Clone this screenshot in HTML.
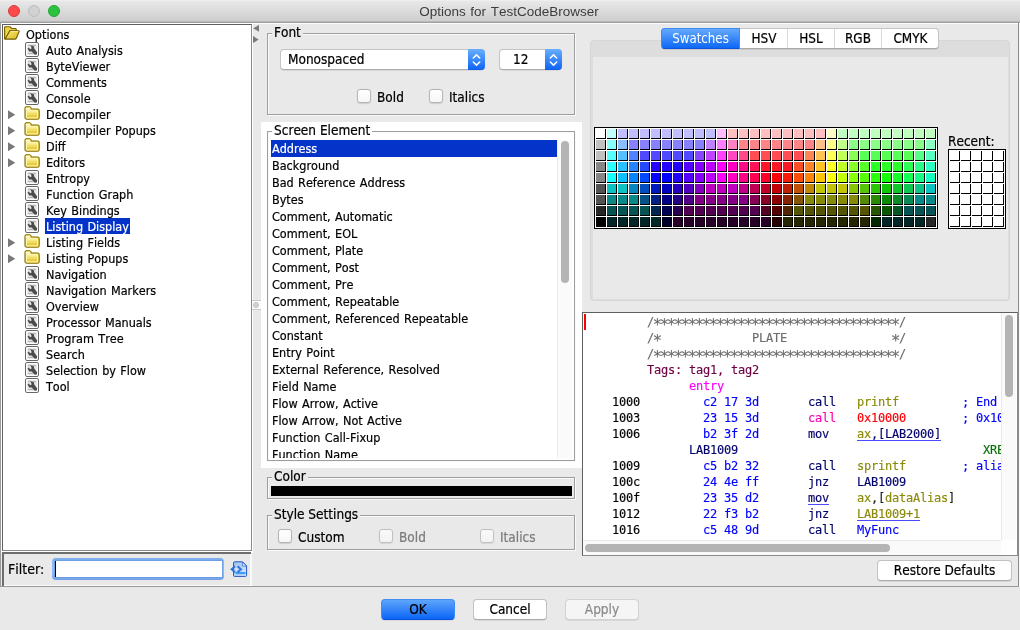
<!DOCTYPE html>
<html lang="en"><head><meta charset="utf-8"><title>Options for TestCodeBrowser</title>
<style>
*{box-sizing:border-box;margin:0;padding:0}
html,body{width:1020px;height:630px;overflow:hidden;background:#e9e9e9}
body{position:relative;will-change:transform;font-kerning:none;font-family:"DejaVu Sans Condensed","DejaVu Sans","Liberation Sans",sans-serif;font-size:12.5px;word-spacing:.8px;color:#000;line-height:16px}
.abs{position:absolute}
.t,.gt,.btn{-webkit-text-stroke:.2px}
.m{-webkit-text-stroke:.15px}
#titlebar{left:0;top:0;width:1020px;height:23px;background:linear-gradient(#f4f4f4 0,#e8e8e8 1px,#cfcfcf 20px,#cdcdcd 21px,#b9b9b9 21px,#b9b9b9 22px,#9f9f9f 22px)}
#title{left:0;top:4px;width:1018px;text-align:center;font-family:"Liberation Sans",sans-serif;font-size:13.5px;color:#3d3d3d;line-height:16px}
.tl{width:12px;height:12px;border-radius:50%;top:5px}
.t{white-space:nowrap;position:absolute;line-height:18px;height:16px}
.st{font-size:15.5px;letter-spacing:-2.331px;position:relative;top:4.3px;left:-1.2px;line-height:0}
.b{font-size:13.5px;word-spacing:0}
.sel{background:#0433c9;color:#fff}
.gb{border:1px solid #9e9e9e;box-shadow:1px 1px 0 #fafafa,inset 1px 1px 0 #fafafa}
.gt{background:#e9e9e9;padding:0 2px;white-space:nowrap;line-height:17px;height:16px;font-size:13.5px;word-spacing:0}
.cb{width:14px;height:14px;border:1px solid #b4b4b4;border-radius:3px;background:linear-gradient(#fff,#f6f6f6);box-shadow:0 .5px 1px rgba(0,0,0,.12)}
.btn{border:1px solid #c2c2c2;border-bottom-color:#ababab;border-radius:4px;background:#fff;text-align:center;white-space:nowrap;box-shadow:0 .5px .5px rgba(0,0,0,.15)}
.m{word-spacing:0;font-family:"DejaVu Sans Mono","Liberation Mono",monospace;font-size:12px;letter-spacing:-0.224px;white-space:pre;position:absolute;line-height:16px;height:16px}
</style></head>
<body>
<svg width="0" height="0" style="position:absolute"><defs>
<linearGradient id="fg" x1="0" y1="0" x2="0" y2="1"><stop offset="0" stop-color="#fcf3a0"/><stop offset="1" stop-color="#e2c222"/></linearGradient>
<linearGradient id="fg2" x1="0" y1="0" x2="1" y2="1"><stop offset="0" stop-color="#faec80"/><stop offset="1" stop-color="#dbb714"/></linearGradient>



</defs></svg>
<div id="titlebar" class="abs"></div>
<div class="abs tl" style="left:8px;background:#fc4a4b;border:.5px solid #e0383a"></div>
<div class="abs tl" style="left:28px;background:#d1d1d1;border:.5px solid #bdbdbd"></div>
<div class="abs tl" style="left:48px;background:#2bc23f;border:.5px solid #20a632"></div>
<div class="abs" style="left:1px;top:23px;width:1017px;height:1px;background:#fcfcfc"></div><div class="abs" style="left:1019px;top:23px;width:1px;height:564px;background:#f8f8f8"></div>
<div id="title" class="abs">Options for TestCodeBrowser</div>
<div class="abs" style="left:0;top:23px;width:1px;height:564px;background:#9c9c9c"></div>
<div class="abs" style="left:1px;top:23px;width:252px;height:530px;background:#fff"></div>
<div id="tree" class="abs" style="left:2px;top:24px;width:250px;height:527px;background:#fff;border:1px solid #5f5f5f;border-right-color:#8a8a8a;border-bottom-color:#8a8a8a"></div>
<svg class="abs" style="left:4px;top:26px" width="16" height="14" viewBox="0 0 16 14"><path d="M.6 1.6 Q.6 .7 1.5 .7 L5.5 .7 Q6.3 .7 6.8 1.4 L7.5 2.5 L11.4 2.5 Q12.2 2.5 12.2 3.3 L12.2 4.7 L6 4.7 L1.5 12.5 L.6 12.5 Z" fill="#efd545" stroke="#6f5b00" stroke-width="1.1"/><path d="M5.9 4.7 L14.6 4.7 Q15.5 4.7 15.1 5.6 L12.3 12.2 Q11.9 13.1 11 13.1 L1.1 13.1 Z" fill="url(#fg2)" stroke="#6f5b00" stroke-width="1.1"/><path d="M6.6 5.5 L14.2 5.5" stroke="#fff6b0" stroke-width=".8"/></svg><div class="t" style="left:26px;top:26px">Options</div>
<svg class="abs" style="left:25px;top:42px" width="14" height="15" viewBox="0 0 14 15"><rect x=".5" y=".5" width="13" height="14" rx="1.5" fill="#fff" stroke="#666" stroke-width="1"/><rect x="2.3" y="2.3" width="9.4" height="10.4" fill="#e3e3e3"/><path d="M3 3.4h8M3 11.6h5" stroke="#aaa" stroke-width=".9"/><path d="M5.2 3.2 L8.8 4.2 L9.2 6.6 L12.2 10.4 L11.6 12.8 L9.4 12.4 L6.8 9.4 L4.2 9.4 L2.6 6.6 L3.6 5.6 L5.2 7.2 L6.6 6.4 L6.2 4.8 Z" fill="#4a4a4a"/></svg><div class="t" style="left:46px;top:42px">Auto Analysis</div>
<svg class="abs" style="left:25px;top:58px" width="14" height="15" viewBox="0 0 14 15"><rect x=".5" y=".5" width="13" height="14" rx="1.5" fill="#fff" stroke="#666" stroke-width="1"/><rect x="2.3" y="2.3" width="9.4" height="10.4" fill="#e3e3e3"/><path d="M3 3.4h8M3 11.6h5" stroke="#aaa" stroke-width=".9"/><path d="M5.2 3.2 L8.8 4.2 L9.2 6.6 L12.2 10.4 L11.6 12.8 L9.4 12.4 L6.8 9.4 L4.2 9.4 L2.6 6.6 L3.6 5.6 L5.2 7.2 L6.6 6.4 L6.2 4.8 Z" fill="#4a4a4a"/></svg><div class="t" style="left:46px;top:58px">ByteViewer</div>
<svg class="abs" style="left:25px;top:74px" width="14" height="15" viewBox="0 0 14 15"><rect x=".5" y=".5" width="13" height="14" rx="1.5" fill="#fff" stroke="#666" stroke-width="1"/><rect x="2.3" y="2.3" width="9.4" height="10.4" fill="#e3e3e3"/><path d="M3 3.4h8M3 11.6h5" stroke="#aaa" stroke-width=".9"/><path d="M5.2 3.2 L8.8 4.2 L9.2 6.6 L12.2 10.4 L11.6 12.8 L9.4 12.4 L6.8 9.4 L4.2 9.4 L2.6 6.6 L3.6 5.6 L5.2 7.2 L6.6 6.4 L6.2 4.8 Z" fill="#4a4a4a"/></svg><div class="t" style="left:46px;top:74px">Comments</div>
<svg class="abs" style="left:25px;top:90px" width="14" height="15" viewBox="0 0 14 15"><rect x=".5" y=".5" width="13" height="14" rx="1.5" fill="#fff" stroke="#666" stroke-width="1"/><rect x="2.3" y="2.3" width="9.4" height="10.4" fill="#e3e3e3"/><path d="M3 3.4h8M3 11.6h5" stroke="#aaa" stroke-width=".9"/><path d="M5.2 3.2 L8.8 4.2 L9.2 6.6 L12.2 10.4 L11.6 12.8 L9.4 12.4 L6.8 9.4 L4.2 9.4 L2.6 6.6 L3.6 5.6 L5.2 7.2 L6.6 6.4 L6.2 4.8 Z" fill="#4a4a4a"/></svg><div class="t" style="left:46px;top:90px">Console</div>
<svg class="abs" style="left:8px;top:110px" width="8" height="10" viewBox="0 0 8 10"><path d="M0 0.3 L7.3 4.8 L0 9.3Z" fill="#7a7a7a"/></svg><svg class="abs" style="left:24px;top:106px" width="16" height="14" viewBox="0 0 16 14"><path d="M1 2.2 Q1 .8 2.3 .8 L5.2 .8 Q6.2 .8 6.8 1.8 L7.6 3 L13.6 3 Q15.2 3 15.2 4.8 L15.2 11.6 Q15.2 13.2 13.6 13.2 L2.6 13.2 Q1 13.2 1 11.6 Z" fill="#f3dd55" stroke="#846c00" stroke-width="1.1"/><path d="M2.6 4.6 L13.6 4.6 L13.6 11.8 L2.6 11.8 Z" fill="url(#fg)" stroke="#fffbd8" stroke-width=".8"/><path d="M1.6 2 L5.6 1.6 L6.8 3.4 L2 3.8Z" fill="#fffbe0"/></svg><div class="t" style="left:46px;top:106px">Decompiler</div>
<svg class="abs" style="left:8px;top:126px" width="8" height="10" viewBox="0 0 8 10"><path d="M0 0.3 L7.3 4.8 L0 9.3Z" fill="#7a7a7a"/></svg><svg class="abs" style="left:24px;top:122px" width="16" height="14" viewBox="0 0 16 14"><path d="M1 2.2 Q1 .8 2.3 .8 L5.2 .8 Q6.2 .8 6.8 1.8 L7.6 3 L13.6 3 Q15.2 3 15.2 4.8 L15.2 11.6 Q15.2 13.2 13.6 13.2 L2.6 13.2 Q1 13.2 1 11.6 Z" fill="#f3dd55" stroke="#846c00" stroke-width="1.1"/><path d="M2.6 4.6 L13.6 4.6 L13.6 11.8 L2.6 11.8 Z" fill="url(#fg)" stroke="#fffbd8" stroke-width=".8"/><path d="M1.6 2 L5.6 1.6 L6.8 3.4 L2 3.8Z" fill="#fffbe0"/></svg><div class="t" style="left:46px;top:122px">Decompiler Popups</div>
<svg class="abs" style="left:8px;top:142px" width="8" height="10" viewBox="0 0 8 10"><path d="M0 0.3 L7.3 4.8 L0 9.3Z" fill="#7a7a7a"/></svg><svg class="abs" style="left:24px;top:138px" width="16" height="14" viewBox="0 0 16 14"><path d="M1 2.2 Q1 .8 2.3 .8 L5.2 .8 Q6.2 .8 6.8 1.8 L7.6 3 L13.6 3 Q15.2 3 15.2 4.8 L15.2 11.6 Q15.2 13.2 13.6 13.2 L2.6 13.2 Q1 13.2 1 11.6 Z" fill="#f3dd55" stroke="#846c00" stroke-width="1.1"/><path d="M2.6 4.6 L13.6 4.6 L13.6 11.8 L2.6 11.8 Z" fill="url(#fg)" stroke="#fffbd8" stroke-width=".8"/><path d="M1.6 2 L5.6 1.6 L6.8 3.4 L2 3.8Z" fill="#fffbe0"/></svg><div class="t" style="left:46px;top:138px">Diff</div>
<svg class="abs" style="left:8px;top:158px" width="8" height="10" viewBox="0 0 8 10"><path d="M0 0.3 L7.3 4.8 L0 9.3Z" fill="#7a7a7a"/></svg><svg class="abs" style="left:24px;top:154px" width="16" height="14" viewBox="0 0 16 14"><path d="M1 2.2 Q1 .8 2.3 .8 L5.2 .8 Q6.2 .8 6.8 1.8 L7.6 3 L13.6 3 Q15.2 3 15.2 4.8 L15.2 11.6 Q15.2 13.2 13.6 13.2 L2.6 13.2 Q1 13.2 1 11.6 Z" fill="#f3dd55" stroke="#846c00" stroke-width="1.1"/><path d="M2.6 4.6 L13.6 4.6 L13.6 11.8 L2.6 11.8 Z" fill="url(#fg)" stroke="#fffbd8" stroke-width=".8"/><path d="M1.6 2 L5.6 1.6 L6.8 3.4 L2 3.8Z" fill="#fffbe0"/></svg><div class="t" style="left:46px;top:154px">Editors</div>
<svg class="abs" style="left:25px;top:170px" width="14" height="15" viewBox="0 0 14 15"><rect x=".5" y=".5" width="13" height="14" rx="1.5" fill="#fff" stroke="#666" stroke-width="1"/><rect x="2.3" y="2.3" width="9.4" height="10.4" fill="#e3e3e3"/><path d="M3 3.4h8M3 11.6h5" stroke="#aaa" stroke-width=".9"/><path d="M5.2 3.2 L8.8 4.2 L9.2 6.6 L12.2 10.4 L11.6 12.8 L9.4 12.4 L6.8 9.4 L4.2 9.4 L2.6 6.6 L3.6 5.6 L5.2 7.2 L6.6 6.4 L6.2 4.8 Z" fill="#4a4a4a"/></svg><div class="t" style="left:46px;top:170px">Entropy</div>
<svg class="abs" style="left:25px;top:186px" width="14" height="15" viewBox="0 0 14 15"><rect x=".5" y=".5" width="13" height="14" rx="1.5" fill="#fff" stroke="#666" stroke-width="1"/><rect x="2.3" y="2.3" width="9.4" height="10.4" fill="#e3e3e3"/><path d="M3 3.4h8M3 11.6h5" stroke="#aaa" stroke-width=".9"/><path d="M5.2 3.2 L8.8 4.2 L9.2 6.6 L12.2 10.4 L11.6 12.8 L9.4 12.4 L6.8 9.4 L4.2 9.4 L2.6 6.6 L3.6 5.6 L5.2 7.2 L6.6 6.4 L6.2 4.8 Z" fill="#4a4a4a"/></svg><div class="t" style="left:46px;top:186px">Function Graph</div>
<svg class="abs" style="left:25px;top:202px" width="14" height="15" viewBox="0 0 14 15"><rect x=".5" y=".5" width="13" height="14" rx="1.5" fill="#fff" stroke="#666" stroke-width="1"/><rect x="2.3" y="2.3" width="9.4" height="10.4" fill="#e3e3e3"/><path d="M3 3.4h8M3 11.6h5" stroke="#aaa" stroke-width=".9"/><path d="M5.2 3.2 L8.8 4.2 L9.2 6.6 L12.2 10.4 L11.6 12.8 L9.4 12.4 L6.8 9.4 L4.2 9.4 L2.6 6.6 L3.6 5.6 L5.2 7.2 L6.6 6.4 L6.2 4.8 Z" fill="#4a4a4a"/></svg><div class="t" style="left:46px;top:202px">Key Bindings</div>
<svg class="abs" style="left:25px;top:218px" width="14" height="15" viewBox="0 0 14 15"><rect x=".5" y=".5" width="13" height="14" rx="1.5" fill="#fff" stroke="#666" stroke-width="1"/><rect x="2.3" y="2.3" width="9.4" height="10.4" fill="#e3e3e3"/><path d="M3 3.4h8M3 11.6h5" stroke="#aaa" stroke-width=".9"/><path d="M5.2 3.2 L8.8 4.2 L9.2 6.6 L12.2 10.4 L11.6 12.8 L9.4 12.4 L6.8 9.4 L4.2 9.4 L2.6 6.6 L3.6 5.6 L5.2 7.2 L6.6 6.4 L6.2 4.8 Z" fill="#4a4a4a"/></svg><div class="t sel" style="left:45px;top:218px;padding:0 1px">Listing Display</div>
<svg class="abs" style="left:8px;top:238px" width="8" height="10" viewBox="0 0 8 10"><path d="M0 0.3 L7.3 4.8 L0 9.3Z" fill="#7a7a7a"/></svg><svg class="abs" style="left:24px;top:234px" width="16" height="14" viewBox="0 0 16 14"><path d="M1 2.2 Q1 .8 2.3 .8 L5.2 .8 Q6.2 .8 6.8 1.8 L7.6 3 L13.6 3 Q15.2 3 15.2 4.8 L15.2 11.6 Q15.2 13.2 13.6 13.2 L2.6 13.2 Q1 13.2 1 11.6 Z" fill="#f3dd55" stroke="#846c00" stroke-width="1.1"/><path d="M2.6 4.6 L13.6 4.6 L13.6 11.8 L2.6 11.8 Z" fill="url(#fg)" stroke="#fffbd8" stroke-width=".8"/><path d="M1.6 2 L5.6 1.6 L6.8 3.4 L2 3.8Z" fill="#fffbe0"/></svg><div class="t" style="left:46px;top:234px">Listing Fields</div>
<svg class="abs" style="left:8px;top:254px" width="8" height="10" viewBox="0 0 8 10"><path d="M0 0.3 L7.3 4.8 L0 9.3Z" fill="#7a7a7a"/></svg><svg class="abs" style="left:24px;top:250px" width="16" height="14" viewBox="0 0 16 14"><path d="M1 2.2 Q1 .8 2.3 .8 L5.2 .8 Q6.2 .8 6.8 1.8 L7.6 3 L13.6 3 Q15.2 3 15.2 4.8 L15.2 11.6 Q15.2 13.2 13.6 13.2 L2.6 13.2 Q1 13.2 1 11.6 Z" fill="#f3dd55" stroke="#846c00" stroke-width="1.1"/><path d="M2.6 4.6 L13.6 4.6 L13.6 11.8 L2.6 11.8 Z" fill="url(#fg)" stroke="#fffbd8" stroke-width=".8"/><path d="M1.6 2 L5.6 1.6 L6.8 3.4 L2 3.8Z" fill="#fffbe0"/></svg><div class="t" style="left:46px;top:250px">Listing Popups</div>
<svg class="abs" style="left:25px;top:266px" width="14" height="15" viewBox="0 0 14 15"><rect x=".5" y=".5" width="13" height="14" rx="1.5" fill="#fff" stroke="#666" stroke-width="1"/><rect x="2.3" y="2.3" width="9.4" height="10.4" fill="#e3e3e3"/><path d="M3 3.4h8M3 11.6h5" stroke="#aaa" stroke-width=".9"/><path d="M5.2 3.2 L8.8 4.2 L9.2 6.6 L12.2 10.4 L11.6 12.8 L9.4 12.4 L6.8 9.4 L4.2 9.4 L2.6 6.6 L3.6 5.6 L5.2 7.2 L6.6 6.4 L6.2 4.8 Z" fill="#4a4a4a"/></svg><div class="t" style="left:46px;top:266px">Navigation</div>
<svg class="abs" style="left:25px;top:282px" width="14" height="15" viewBox="0 0 14 15"><rect x=".5" y=".5" width="13" height="14" rx="1.5" fill="#fff" stroke="#666" stroke-width="1"/><rect x="2.3" y="2.3" width="9.4" height="10.4" fill="#e3e3e3"/><path d="M3 3.4h8M3 11.6h5" stroke="#aaa" stroke-width=".9"/><path d="M5.2 3.2 L8.8 4.2 L9.2 6.6 L12.2 10.4 L11.6 12.8 L9.4 12.4 L6.8 9.4 L4.2 9.4 L2.6 6.6 L3.6 5.6 L5.2 7.2 L6.6 6.4 L6.2 4.8 Z" fill="#4a4a4a"/></svg><div class="t" style="left:46px;top:282px">Navigation Markers</div>
<svg class="abs" style="left:25px;top:298px" width="14" height="15" viewBox="0 0 14 15"><rect x=".5" y=".5" width="13" height="14" rx="1.5" fill="#fff" stroke="#666" stroke-width="1"/><rect x="2.3" y="2.3" width="9.4" height="10.4" fill="#e3e3e3"/><path d="M3 3.4h8M3 11.6h5" stroke="#aaa" stroke-width=".9"/><path d="M5.2 3.2 L8.8 4.2 L9.2 6.6 L12.2 10.4 L11.6 12.8 L9.4 12.4 L6.8 9.4 L4.2 9.4 L2.6 6.6 L3.6 5.6 L5.2 7.2 L6.6 6.4 L6.2 4.8 Z" fill="#4a4a4a"/></svg><div class="t" style="left:46px;top:298px">Overview</div>
<svg class="abs" style="left:25px;top:314px" width="14" height="15" viewBox="0 0 14 15"><rect x=".5" y=".5" width="13" height="14" rx="1.5" fill="#fff" stroke="#666" stroke-width="1"/><rect x="2.3" y="2.3" width="9.4" height="10.4" fill="#e3e3e3"/><path d="M3 3.4h8M3 11.6h5" stroke="#aaa" stroke-width=".9"/><path d="M5.2 3.2 L8.8 4.2 L9.2 6.6 L12.2 10.4 L11.6 12.8 L9.4 12.4 L6.8 9.4 L4.2 9.4 L2.6 6.6 L3.6 5.6 L5.2 7.2 L6.6 6.4 L6.2 4.8 Z" fill="#4a4a4a"/></svg><div class="t" style="left:46px;top:314px">Processor Manuals</div>
<svg class="abs" style="left:25px;top:330px" width="14" height="15" viewBox="0 0 14 15"><rect x=".5" y=".5" width="13" height="14" rx="1.5" fill="#fff" stroke="#666" stroke-width="1"/><rect x="2.3" y="2.3" width="9.4" height="10.4" fill="#e3e3e3"/><path d="M3 3.4h8M3 11.6h5" stroke="#aaa" stroke-width=".9"/><path d="M5.2 3.2 L8.8 4.2 L9.2 6.6 L12.2 10.4 L11.6 12.8 L9.4 12.4 L6.8 9.4 L4.2 9.4 L2.6 6.6 L3.6 5.6 L5.2 7.2 L6.6 6.4 L6.2 4.8 Z" fill="#4a4a4a"/></svg><div class="t" style="left:46px;top:330px">Program Tree</div>
<svg class="abs" style="left:25px;top:346px" width="14" height="15" viewBox="0 0 14 15"><rect x=".5" y=".5" width="13" height="14" rx="1.5" fill="#fff" stroke="#666" stroke-width="1"/><rect x="2.3" y="2.3" width="9.4" height="10.4" fill="#e3e3e3"/><path d="M3 3.4h8M3 11.6h5" stroke="#aaa" stroke-width=".9"/><path d="M5.2 3.2 L8.8 4.2 L9.2 6.6 L12.2 10.4 L11.6 12.8 L9.4 12.4 L6.8 9.4 L4.2 9.4 L2.6 6.6 L3.6 5.6 L5.2 7.2 L6.6 6.4 L6.2 4.8 Z" fill="#4a4a4a"/></svg><div class="t" style="left:46px;top:346px">Search</div>
<svg class="abs" style="left:25px;top:362px" width="14" height="15" viewBox="0 0 14 15"><rect x=".5" y=".5" width="13" height="14" rx="1.5" fill="#fff" stroke="#666" stroke-width="1"/><rect x="2.3" y="2.3" width="9.4" height="10.4" fill="#e3e3e3"/><path d="M3 3.4h8M3 11.6h5" stroke="#aaa" stroke-width=".9"/><path d="M5.2 3.2 L8.8 4.2 L9.2 6.6 L12.2 10.4 L11.6 12.8 L9.4 12.4 L6.8 9.4 L4.2 9.4 L2.6 6.6 L3.6 5.6 L5.2 7.2 L6.6 6.4 L6.2 4.8 Z" fill="#4a4a4a"/></svg><div class="t" style="left:46px;top:362px">Selection by Flow</div>
<svg class="abs" style="left:25px;top:378px" width="14" height="15" viewBox="0 0 14 15"><rect x=".5" y=".5" width="13" height="14" rx="1.5" fill="#fff" stroke="#666" stroke-width="1"/><rect x="2.3" y="2.3" width="9.4" height="10.4" fill="#e3e3e3"/><path d="M3 3.4h8M3 11.6h5" stroke="#aaa" stroke-width=".9"/><path d="M5.2 3.2 L8.8 4.2 L9.2 6.6 L12.2 10.4 L11.6 12.8 L9.4 12.4 L6.8 9.4 L4.2 9.4 L2.6 6.6 L3.6 5.6 L5.2 7.2 L6.6 6.4 L6.2 4.8 Z" fill="#4a4a4a"/></svg><div class="t" style="left:46px;top:378px">Tool</div>
<div class="abs" style="left:2px;top:552px;width:249px;height:34px;border-top:2px solid #6e6e6e;border-left:2px solid #6e6e6e;background:#e9e9e9"></div>
<div class="abs" style="left:250px;top:554px;width:2px;height:32px;background:#f9f9f9"></div><div class="abs" style="left:4px;top:585px;width:248px;height:1px;background:#fbfbfb"></div><div class="t b" style="left:8px;top:560px;font-size:14px">Filter:</div>
<div class="abs" style="left:52px;top:558px;width:172px;height:22px;border-radius:4px;background:linear-gradient(#7aabee,#8fb9f2 30%,#8fb9f2 70%,#6f9fe6)"></div>
<div class="abs" style="left:54.5px;top:560.5px;width:167px;height:16.7px;background:#fff;box-shadow:0 0 0 .6px #5e95e2"></div>
<div class="abs" style="left:55px;top:561px;width:1px;height:16px;background:#000"></div>
<svg class="abs" style="left:230px;top:560px" width="18" height="18" viewBox="0 0 18 18"><defs><linearGradient id="pg" x1="0" y1="0" x2="1" y2="1"><stop offset="0" stop-color="#9dc0f0"/><stop offset="1" stop-color="#dbe8fc"/></linearGradient></defs><path d="M4.5 1.8 L12.6 1.8 L16.6 5.8 L16.6 15.4 Q16.6 16.4 15.6 16.4 L4.5 16.4 Q3.5 16.4 3.5 15.4 L3.5 2.8 Q3.5 1.8 4.5 1.8Z" fill="url(#pg)" stroke="#2457c0" stroke-width="1"/><path d="M12.4 2 L12.4 6 L16.4 6Z" fill="#f4f8ff" stroke="#2457c0" stroke-width=".7"/><path d="M5.5 12h10v2.2h-10z" fill="#3a9cff"/><path d="M5 6.2 L1.6 9.2 L5 12.2" fill="none" stroke="#2f74d8" stroke-width="1.9"/><path d="M7.6 6.2 L11 9.2 L7.6 12.2" fill="none" stroke="#2f74d8" stroke-width="1.9"/><path d="M6.3 7.4 L8.3 9.2 L6.3 11 L4.3 9.2Z" fill="#cfe0fb"/></svg>
<svg class="abs" style="left:252px;top:24px" width="8" height="22" viewBox="0 0 8 22"><path d="M7 1 L7 7.7 L1.1 4.3Z M1 12 L1 19 L6.6 15.5Z" fill="#797979"/></svg>
<div class="abs" style="left:252px;top:300px;width:9px;height:10px;background:#fafafa;border-top:1px solid #c9c9c9;border-bottom:1px solid #c9c9c9"></div><div class="abs" style="left:253px;top:302px;width:6px;height:6px;border-radius:50%;background:#d2d2d2;border:.5px solid #c2c2c2"></div>
<div class="abs gb" style="left:267px;top:33px;width:308px;height:82px"></div><div class="abs gt" style="left:272px;top:24px;background:#e9e9e9;padding:0 2px 0 2px">Font</div>
<div class="abs" style="left:280px;top:49px;width:205px;height:21px;border-radius:4px;background:#fff;border:1px solid #c4c4c4;border-bottom-color:#adadad;box-shadow:0 .5px .5px rgba(0,0,0,.15)"></div><div class="abs" style="left:468px;top:49px;width:17px;height:21px;border-radius:0 4px 4px 0;background:linear-gradient(#68affb,#1469f6 92%,#0f5be0)"></div><svg class="abs" style="left:468px;top:50px" width="17" height="20" viewBox="0 0 17 20"><path d="M5.3 8 L8.5 4.9 L11.7 8 M5.3 12 L8.5 15.1 L11.7 12" fill="none" stroke="#fff" stroke-width="1.5" stroke-linecap="round" stroke-linejoin="round"/></svg><div class="t b" style="left:288px;top:50px">Monospaced</div>
<div class="abs" style="left:499px;top:49px;width:63px;height:21px;border-radius:4px;background:#fff;border:1px solid #c4c4c4;border-bottom-color:#adadad;box-shadow:0 .5px .5px rgba(0,0,0,.15)"></div><div class="abs" style="left:545px;top:49px;width:17px;height:21px;border-radius:0 4px 4px 0;background:linear-gradient(#68affb,#1469f6 92%,#0f5be0)"></div><svg class="abs" style="left:545px;top:50px" width="17" height="20" viewBox="0 0 17 20"><path d="M5.3 8 L8.5 4.9 L11.7 8 M5.3 12 L8.5 15.1 L11.7 12" fill="none" stroke="#fff" stroke-width="1.5" stroke-linecap="round" stroke-linejoin="round"/></svg><div class="t b" style="left:513px;top:50px">12</div>
<div class="abs cb" style="left:357px;top:89px"></div><div class="t b" style="left:377px;top:87.5px">Bold</div><div class="abs cb" style="left:429px;top:89px"></div><div class="t b" style="left:449px;top:87.5px">Italics</div>
<div class="abs" style="left:261px;top:122px;width:321px;height:346px;background:#fff"></div>
<div class="abs gb" style="left:267px;top:131px;width:308px;height:330px"></div><div class="abs gt" style="left:272px;top:122px;background:#fff;padding:0 2px 0 2px">Screen Element</div>
<div class="abs" style="left:271px;top:140px;width:302px;height:318px;overflow:hidden"><div class="abs" style="left:0;top:0;width:286px;height:17px;background:#0433c9"></div><div class="t" style="left:1px;top:0px;color:#fff">Address</div><div class="t" style="left:1px;top:17px">Background</div><div class="t" style="left:1px;top:34px">Bad Reference Address</div><div class="t" style="left:1px;top:51px">Bytes</div><div class="t" style="left:1px;top:68px">Comment, Automatic</div><div class="t" style="left:1px;top:85px">Comment, EOL</div><div class="t" style="left:1px;top:102px">Comment, Plate</div><div class="t" style="left:1px;top:119px">Comment, Post</div><div class="t" style="left:1px;top:136px">Comment, Pre</div><div class="t" style="left:1px;top:153px">Comment, Repeatable</div><div class="t" style="left:1px;top:170px">Comment, Referenced Repeatable</div><div class="t" style="left:1px;top:187px">Constant</div><div class="t" style="left:1px;top:204px">Entry Point</div><div class="t" style="left:1px;top:221px">External Reference, Resolved</div><div class="t" style="left:1px;top:238px">Field Name</div><div class="t" style="left:1px;top:255px">Flow Arrow, Active</div><div class="t" style="left:1px;top:272px">Flow Arrow, Not Active</div><div class="t" style="left:1px;top:289px">Function Call-Fixup</div><div class="t" style="left:1px;top:306px">Function Name</div></div>
<div class="abs" style="left:557px;top:140px;width:15px;height:318px;background:#fafafa;border-left:1px solid #ededed"></div><div class="abs" style="left:561px;top:141px;width:8px;height:142px;border-radius:4px;background:#b4b4b4"></div>
<div class="abs gb" style="left:267px;top:477px;width:308px;height:22px"></div><div class="abs gt" style="left:272px;top:468px;background:#e9e9e9;padding:0 2px 0 2px">Color</div>
<div class="abs" style="left:271px;top:486px;width:301px;height:10px;background:#000"></div>
<div class="abs gb" style="left:267px;top:515px;width:308px;height:35px"></div><div class="abs gt" style="left:272px;top:506px;background:#e9e9e9;padding:0 2px 0 2px">Style Settings</div>
<div class="abs cb" style="left:278px;top:529px"></div><div class="t b" style="left:298px;top:528px">Custom</div><div class="abs cb" style="left:379px;top:529px;opacity:.75"></div><div class="t b" style="left:399px;top:528px;color:#7c7c7c">Bold</div><div class="abs cb" style="left:480px;top:529px;opacity:.75"></div><div class="t b" style="left:500px;top:528px;color:#7c7c7c">Italics</div>
<div class="abs" style="left:590px;top:40px;width:420px;height:261px;border-radius:4px;background:#dddddd;border:1px solid #d6d6d6"></div><div class="abs" style="left:593px;top:57px;width:415px;height:242px;background:#e9e9e9"></div>
<div class="abs" style="left:661px;top:28px;width:278px;height:21px;border-radius:4px;background:#fff;border:1px solid #c4c4c4;border-bottom-color:#a9a9a9;box-shadow:0 .5px .5px rgba(0,0,0,.18)"></div><div class="abs" style="left:661px;top:28px;width:79px;height:21px;border-radius:4px 0 0 4px;background:linear-gradient(#64a9fb,#0e68f7);border:1px solid #3c8af5;border-bottom-color:#0a54dd"></div><div class="abs" style="left:787px;top:29px;width:1px;height:19px;background:#d9d9d9"></div><div class="abs" style="left:834px;top:29px;width:1px;height:19px;background:#d9d9d9"></div><div class="abs" style="left:881px;top:29px;width:1px;height:19px;background:#d9d9d9"></div><div class="t b" style="left:660.5px;width:80px;text-align:center;top:30px;font-size:13.4px;color:#fff;-webkit-text-stroke:0;font-size:13.2px">Swatches</div><div class="t b" style="left:724px;width:80px;text-align:center;top:30px;font-size:13.4px;color:#000">HSV</div><div class="t b" style="left:771px;width:80px;text-align:center;top:30px;font-size:13.4px;color:#000">HSL</div><div class="t b" style="left:818px;width:80px;text-align:center;top:30px;font-size:13.4px;color:#000">RGB</div><div class="t b" style="left:870.5px;width:80px;text-align:center;top:30px;font-size:13.4px;color:#000">CMYK</div>
<svg class="abs" style="left:594px;top:127px" width="344" height="102" viewBox="0 0 344 102" shape-rendering="crispEdges"><rect width="344" height="102" fill="#000"/><rect x="1" y="1" width="342" height="100" fill="#fff"/><g transform="translate(0,2)"><path d="M2 0h10v10h-10z"/><path fill="#ffffff" d="M2 0h9v9h-9z"/><path d="M13 0h10v10h-10z"/><path fill="#c1ffff" d="M13 0h9v9h-9z"/><path d="M24 0h10v10h-10z"/><path fill="#c1beff" d="M24 0h9v9h-9z"/><path d="M35 0h10v10h-10z"/><path fill="#c1beff" d="M35 0h9v9h-9z"/><path d="M46 0h10v10h-10z"/><path fill="#c1beff" d="M46 0h9v9h-9z"/><path d="M57 0h10v10h-10z"/><path fill="#c1beff" d="M57 0h9v9h-9z"/><path d="M68 0h10v10h-10z"/><path fill="#c1beff" d="M68 0h9v9h-9z"/><path d="M79 0h10v10h-10z"/><path fill="#c1beff" d="M79 0h9v9h-9z"/><path d="M90 0h10v10h-10z"/><path fill="#c1beff" d="M90 0h9v9h-9z"/><path d="M101 0h10v10h-10z"/><path fill="#c1beff" d="M101 0h9v9h-9z"/><path d="M112 0h10v10h-10z"/><path fill="#c1beff" d="M112 0h9v9h-9z"/><path d="M123 0h10v10h-10z"/><path fill="#febdff" d="M123 0h9v9h-9z"/><path d="M134 0h10v10h-10z"/><path fill="#ffbfc1" d="M134 0h9v9h-9z"/><path d="M145 0h10v10h-10z"/><path fill="#ffbfc1" d="M145 0h9v9h-9z"/><path d="M156 0h10v10h-10z"/><path fill="#ffbfc1" d="M156 0h9v9h-9z"/><path d="M167 0h10v10h-10z"/><path fill="#ffbfc1" d="M167 0h9v9h-9z"/><path d="M178 0h10v10h-10z"/><path fill="#ffbfc1" d="M178 0h9v9h-9z"/><path d="M189 0h10v10h-10z"/><path fill="#ffbfc1" d="M189 0h9v9h-9z"/><path d="M200 0h10v10h-10z"/><path fill="#ffbfc1" d="M200 0h9v9h-9z"/><path d="M211 0h10v10h-10z"/><path fill="#ffbfc1" d="M211 0h9v9h-9z"/><path d="M222 0h10v10h-10z"/><path fill="#ffbfc1" d="M222 0h9v9h-9z"/><path d="M233 0h10v10h-10z"/><path fill="#ffffc1" d="M233 0h9v9h-9z"/><path d="M244 0h10v10h-10z"/><path fill="#c1ffc1" d="M244 0h9v9h-9z"/><path d="M255 0h10v10h-10z"/><path fill="#c1ffc1" d="M255 0h9v9h-9z"/><path d="M266 0h10v10h-10z"/><path fill="#c1ffc1" d="M266 0h9v9h-9z"/><path d="M277 0h10v10h-10z"/><path fill="#c1ffc1" d="M277 0h9v9h-9z"/><path d="M288 0h10v10h-10z"/><path fill="#c1ffc1" d="M288 0h9v9h-9z"/><path d="M299 0h10v10h-10z"/><path fill="#c1ffc1" d="M299 0h9v9h-9z"/><path d="M310 0h10v10h-10z"/><path fill="#c1ffc1" d="M310 0h9v9h-9z"/><path d="M321 0h10v10h-10z"/><path fill="#c1ffc1" d="M321 0h9v9h-9z"/><path d="M332 0h10v10h-10z"/><path fill="#c1ffc1" d="M332 0h9v9h-9z"/></g><g transform="translate(0,13)"><path d="M2 0h10v10h-10z"/><path fill="#c1c1c1" d="M2 0h9v9h-9z"/><path d="M13 0h10v10h-10z"/><path fill="#88ffff" d="M13 0h9v9h-9z"/><path d="M24 0h10v10h-10z"/><path fill="#87bfff" d="M24 0h9v9h-9z"/><path d="M35 0h10v10h-10z"/><path fill="#8781ff" d="M35 0h9v9h-9z"/><path d="M46 0h10v10h-10z"/><path fill="#8781ff" d="M46 0h9v9h-9z"/><path d="M57 0h10v10h-10z"/><path fill="#8781ff" d="M57 0h9v9h-9z"/><path d="M68 0h10v10h-10z"/><path fill="#8781ff" d="M68 0h9v9h-9z"/><path d="M79 0h10v10h-10z"/><path fill="#8781ff" d="M79 0h9v9h-9z"/><path d="M90 0h10v10h-10z"/><path fill="#8781ff" d="M90 0h9v9h-9z"/><path d="M101 0h10v10h-10z"/><path fill="#8781ff" d="M101 0h9v9h-9z"/><path d="M112 0h10v10h-10z"/><path fill="#c080ff" d="M112 0h9v9h-9z"/><path d="M123 0h10v10h-10z"/><path fill="#fe7eff" d="M123 0h9v9h-9z"/><path d="M134 0h10v10h-10z"/><path fill="#fe81c1" d="M134 0h9v9h-9z"/><path d="M145 0h10v10h-10z"/><path fill="#fe8487" d="M145 0h9v9h-9z"/><path d="M156 0h10v10h-10z"/><path fill="#fe8487" d="M156 0h9v9h-9z"/><path d="M167 0h10v10h-10z"/><path fill="#fe8487" d="M167 0h9v9h-9z"/><path d="M178 0h10v10h-10z"/><path fill="#fe8487" d="M178 0h9v9h-9z"/><path d="M189 0h10v10h-10z"/><path fill="#fe8487" d="M189 0h9v9h-9z"/><path d="M200 0h10v10h-10z"/><path fill="#fe8487" d="M200 0h9v9h-9z"/><path d="M211 0h10v10h-10z"/><path fill="#fe8487" d="M211 0h9v9h-9z"/><path d="M222 0h10v10h-10z"/><path fill="#ffc187" d="M222 0h9v9h-9z"/><path d="M233 0h10v10h-10z"/><path fill="#ffff88" d="M233 0h9v9h-9z"/><path d="M244 0h10v10h-10z"/><path fill="#c1ff87" d="M244 0h9v9h-9z"/><path d="M255 0h10v10h-10z"/><path fill="#89ff87" d="M255 0h9v9h-9z"/><path d="M266 0h10v10h-10z"/><path fill="#89ff87" d="M266 0h9v9h-9z"/><path d="M277 0h10v10h-10z"/><path fill="#89ff87" d="M277 0h9v9h-9z"/><path d="M288 0h10v10h-10z"/><path fill="#89ff87" d="M288 0h9v9h-9z"/><path d="M299 0h10v10h-10z"/><path fill="#89ff87" d="M299 0h9v9h-9z"/><path d="M310 0h10v10h-10z"/><path fill="#89ff87" d="M310 0h9v9h-9z"/><path d="M321 0h10v10h-10z"/><path fill="#89ff87" d="M321 0h9v9h-9z"/><path d="M332 0h10v10h-10z"/><path fill="#89ffc1" d="M332 0h9v9h-9z"/></g><g transform="translate(0,24)"><path d="M2 0h10v10h-10z"/><path fill="#c1c1c1" d="M2 0h9v9h-9z"/><path d="M13 0h10v10h-10z"/><path fill="#55ffff" d="M13 0h9v9h-9z"/><path d="M24 0h10v10h-10z"/><path fill="#54c0ff" d="M24 0h9v9h-9z"/><path d="M35 0h10v10h-10z"/><path fill="#5382ff" d="M35 0h9v9h-9z"/><path d="M46 0h10v10h-10z"/><path fill="#5248ff" d="M46 0h9v9h-9z"/><path d="M57 0h10v10h-10z"/><path fill="#5248ff" d="M57 0h9v9h-9z"/><path d="M68 0h10v10h-10z"/><path fill="#5248ff" d="M68 0h9v9h-9z"/><path d="M79 0h10v10h-10z"/><path fill="#5248ff" d="M79 0h9v9h-9z"/><path d="M90 0h10v10h-10z"/><path fill="#5248ff" d="M90 0h9v9h-9z"/><path d="M101 0h10v10h-10z"/><path fill="#8647ff" d="M101 0h9v9h-9z"/><path d="M112 0h10v10h-10z"/><path fill="#c044ff" d="M112 0h9v9h-9z"/><path d="M123 0h10v10h-10z"/><path fill="#fe41ff" d="M123 0h9v9h-9z"/><path d="M134 0h10v10h-10z"/><path fill="#fe47c1" d="M134 0h9v9h-9z"/><path d="M145 0h10v10h-10z"/><path fill="#fe4a87" d="M145 0h9v9h-9z"/><path d="M156 0h10v10h-10z"/><path fill="#fe4d54" d="M156 0h9v9h-9z"/><path d="M167 0h10v10h-10z"/><path fill="#fe4d54" d="M167 0h9v9h-9z"/><path d="M178 0h10v10h-10z"/><path fill="#fe4d54" d="M178 0h9v9h-9z"/><path d="M189 0h10v10h-10z"/><path fill="#fe4d54" d="M189 0h9v9h-9z"/><path d="M200 0h10v10h-10z"/><path fill="#fe4d54" d="M200 0h9v9h-9z"/><path d="M211 0h10v10h-10z"/><path fill="#fe8554" d="M211 0h9v9h-9z"/><path d="M222 0h10v10h-10z"/><path fill="#ffc254" d="M222 0h9v9h-9z"/><path d="M233 0h10v10h-10z"/><path fill="#ffff54" d="M233 0h9v9h-9z"/><path d="M244 0h10v10h-10z"/><path fill="#c2ff54" d="M244 0h9v9h-9z"/><path d="M255 0h10v10h-10z"/><path fill="#89ff54" d="M255 0h9v9h-9z"/><path d="M266 0h10v10h-10z"/><path fill="#56ff54" d="M266 0h9v9h-9z"/><path d="M277 0h10v10h-10z"/><path fill="#56ff54" d="M277 0h9v9h-9z"/><path d="M288 0h10v10h-10z"/><path fill="#56ff54" d="M288 0h9v9h-9z"/><path d="M299 0h10v10h-10z"/><path fill="#56ff54" d="M299 0h9v9h-9z"/><path d="M310 0h10v10h-10z"/><path fill="#56ff54" d="M310 0h9v9h-9z"/><path d="M321 0h10v10h-10z"/><path fill="#56ff87" d="M321 0h9v9h-9z"/><path d="M332 0h10v10h-10z"/><path fill="#56ffc1" d="M332 0h9v9h-9z"/></g><g transform="translate(0,35)"><path d="M2 0h10v10h-10z"/><path fill="#878787" d="M2 0h9v9h-9z"/><path d="M13 0h10v10h-10z"/><path fill="#2bffff" d="M13 0h9v9h-9z"/><path d="M24 0h10v10h-10z"/><path fill="#29c0ff" d="M24 0h9v9h-9z"/><path d="M35 0h10v10h-10z"/><path fill="#2783ff" d="M35 0h9v9h-9z"/><path d="M46 0h10v10h-10z"/><path fill="#2649ff" d="M46 0h9v9h-9z"/><path d="M57 0h10v10h-10z"/><path fill="#2500ff" d="M57 0h9v9h-9z"/><path d="M68 0h10v10h-10z"/><path fill="#2500ff" d="M68 0h9v9h-9z"/><path d="M79 0h10v10h-10z"/><path fill="#2500ff" d="M79 0h9v9h-9z"/><path d="M90 0h10v10h-10z"/><path fill="#5200ff" d="M90 0h9v9h-9z"/><path d="M101 0h10v10h-10z"/><path fill="#8600ff" d="M101 0h9v9h-9z"/><path d="M112 0h10v10h-10z"/><path fill="#c000ff" d="M112 0h9v9h-9z"/><path d="M123 0h10v10h-10z"/><path fill="#fe00ff" d="M123 0h9v9h-9z"/><path d="M134 0h10v10h-10z"/><path fill="#fe00c1" d="M134 0h9v9h-9z"/><path d="M145 0h10v10h-10z"/><path fill="#fe0c87" d="M145 0h9v9h-9z"/><path d="M156 0h10v10h-10z"/><path fill="#fe1454" d="M156 0h9v9h-9z"/><path d="M167 0h10v10h-10z"/><path fill="#fe1827" d="M167 0h9v9h-9z"/><path d="M178 0h10v10h-10z"/><path fill="#fe1827" d="M178 0h9v9h-9z"/><path d="M189 0h10v10h-10z"/><path fill="#fe1827" d="M189 0h9v9h-9z"/><path d="M200 0h10v10h-10z"/><path fill="#fe4e28" d="M200 0h9v9h-9z"/><path d="M211 0h10v10h-10z"/><path fill="#fe8628" d="M211 0h9v9h-9z"/><path d="M222 0h10v10h-10z"/><path fill="#ffc328" d="M222 0h9v9h-9z"/><path d="M233 0h10v10h-10z"/><path fill="#ffff28" d="M233 0h9v9h-9z"/><path d="M244 0h10v10h-10z"/><path fill="#c2ff28" d="M244 0h9v9h-9z"/><path d="M255 0h10v10h-10z"/><path fill="#89ff28" d="M255 0h9v9h-9z"/><path d="M266 0h10v10h-10z"/><path fill="#56ff28" d="M266 0h9v9h-9z"/><path d="M277 0h10v10h-10z"/><path fill="#2cff27" d="M277 0h9v9h-9z"/><path d="M288 0h10v10h-10z"/><path fill="#2cff27" d="M288 0h9v9h-9z"/><path d="M299 0h10v10h-10z"/><path fill="#2cff27" d="M299 0h9v9h-9z"/><path d="M310 0h10v10h-10z"/><path fill="#2cff54" d="M310 0h9v9h-9z"/><path d="M321 0h10v10h-10z"/><path fill="#2cff87" d="M321 0h9v9h-9z"/><path d="M332 0h10v10h-10z"/><path fill="#2cffc1" d="M332 0h9v9h-9z"/></g><g transform="translate(0,46)"><path d="M2 0h10v10h-10z"/><path fill="#878787" d="M2 0h9v9h-9z"/><path d="M13 0h10v10h-10z"/><path fill="#11ffff" d="M13 0h9v9h-9z"/><path d="M24 0h10v10h-10z"/><path fill="#0cc0ff" d="M24 0h9v9h-9z"/><path d="M35 0h10v10h-10z"/><path fill="#0683ff" d="M35 0h9v9h-9z"/><path d="M46 0h10v10h-10z"/><path fill="#0049ff" d="M46 0h9v9h-9z"/><path d="M57 0h10v10h-10z"/><path fill="#0004ff" d="M57 0h9v9h-9z"/><path d="M68 0h10v10h-10z"/><path fill="#0000ff" d="M68 0h9v9h-9z"/><path d="M79 0h10v10h-10z"/><path fill="#2500ff" d="M79 0h9v9h-9z"/><path d="M90 0h10v10h-10z"/><path fill="#5200ff" d="M90 0h9v9h-9z"/><path d="M101 0h10v10h-10z"/><path fill="#8600ff" d="M101 0h9v9h-9z"/><path d="M112 0h10v10h-10z"/><path fill="#bf00ff" d="M112 0h9v9h-9z"/><path d="M123 0h10v10h-10z"/><path fill="#fe00ff" d="M123 0h9v9h-9z"/><path d="M134 0h10v10h-10z"/><path fill="#fe00c1" d="M134 0h9v9h-9z"/><path d="M145 0h10v10h-10z"/><path fill="#fe0087" d="M145 0h9v9h-9z"/><path d="M156 0h10v10h-10z"/><path fill="#fe0054" d="M156 0h9v9h-9z"/><path d="M167 0h10v10h-10z"/><path fill="#fe0027" d="M167 0h9v9h-9z"/><path d="M178 0h10v10h-10z"/><path fill="#fe0007" d="M178 0h9v9h-9z"/><path d="M189 0h10v10h-10z"/><path fill="#fe1907" d="M189 0h9v9h-9z"/><path d="M200 0h10v10h-10z"/><path fill="#fe4f08" d="M200 0h9v9h-9z"/><path d="M211 0h10v10h-10z"/><path fill="#fe8608" d="M211 0h9v9h-9z"/><path d="M222 0h10v10h-10z"/><path fill="#ffc309" d="M222 0h9v9h-9z"/><path d="M233 0h10v10h-10z"/><path fill="#ffff0b" d="M233 0h9v9h-9z"/><path d="M244 0h10v10h-10z"/><path fill="#c2ff09" d="M244 0h9v9h-9z"/><path d="M255 0h10v10h-10z"/><path fill="#89ff08" d="M255 0h9v9h-9z"/><path d="M266 0h10v10h-10z"/><path fill="#56ff08" d="M266 0h9v9h-9z"/><path d="M277 0h10v10h-10z"/><path fill="#2cff07" d="M277 0h9v9h-9z"/><path d="M288 0h10v10h-10z"/><path fill="#14ff07" d="M288 0h9v9h-9z"/><path d="M299 0h10v10h-10z"/><path fill="#14ff27" d="M299 0h9v9h-9z"/><path d="M310 0h10v10h-10z"/><path fill="#13ff54" d="M310 0h9v9h-9z"/><path d="M321 0h10v10h-10z"/><path fill="#13ff87" d="M321 0h9v9h-9z"/><path d="M332 0h10v10h-10z"/><path fill="#12ffc1" d="M332 0h9v9h-9z"/></g><g transform="translate(0,57)"><path d="M2 0h10v10h-10z"/><path fill="#535353" d="M2 0h9v9h-9z"/><path d="M13 0h10v10h-10z"/><path fill="#0dc3c1" d="M13 0h9v9h-9z"/><path d="M24 0h10v10h-10z"/><path fill="#0dc3c1" d="M24 0h9v9h-9z"/><path d="M35 0h10v10h-10z"/><path fill="#0886c0" d="M35 0h9v9h-9z"/><path d="M46 0h10v10h-10z"/><path fill="#024ec0" d="M46 0h9v9h-9z"/><path d="M57 0h10v10h-10z"/><path fill="#0018c0" d="M57 0h9v9h-9z"/><path d="M68 0h10v10h-10z"/><path fill="#0000c0" d="M68 0h9v9h-9z"/><path d="M79 0h10v10h-10z"/><path fill="#2500c0" d="M79 0h9v9h-9z"/><path d="M90 0h10v10h-10z"/><path fill="#5200c0" d="M90 0h9v9h-9z"/><path d="M101 0h10v10h-10z"/><path fill="#8600c0" d="M101 0h9v9h-9z"/><path d="M112 0h10v10h-10z"/><path fill="#c000c1" d="M112 0h9v9h-9z"/><path d="M123 0h10v10h-10z"/><path fill="#c000c1" d="M123 0h9v9h-9z"/><path d="M134 0h10v10h-10z"/><path fill="#c000c1" d="M134 0h9v9h-9z"/><path d="M145 0h10v10h-10z"/><path fill="#c00087" d="M145 0h9v9h-9z"/><path d="M156 0h10v10h-10z"/><path fill="#c00053" d="M156 0h9v9h-9z"/><path d="M167 0h10v10h-10z"/><path fill="#c00027" d="M167 0h9v9h-9z"/><path d="M178 0h10v10h-10z"/><path fill="#c00006" d="M178 0h9v9h-9z"/><path d="M189 0h10v10h-10z"/><path fill="#c01f06" d="M189 0h9v9h-9z"/><path d="M200 0h10v10h-10z"/><path fill="#c05106" d="M200 0h9v9h-9z"/><path d="M211 0h10v10h-10z"/><path fill="#c08807" d="M211 0h9v9h-9z"/><path d="M222 0h10v10h-10z"/><path fill="#c1c408" d="M222 0h9v9h-9z"/><path d="M233 0h10v10h-10z"/><path fill="#c1c408" d="M233 0h9v9h-9z"/><path d="M244 0h10v10h-10z"/><path fill="#c1c408" d="M244 0h9v9h-9z"/><path d="M255 0h10v10h-10z"/><path fill="#88c507" d="M255 0h9v9h-9z"/><path d="M266 0h10v10h-10z"/><path fill="#55c606" d="M266 0h9v9h-9z"/><path d="M277 0h10v10h-10z"/><path fill="#2ac606" d="M277 0h9v9h-9z"/><path d="M288 0h10v10h-10z"/><path fill="#0fc605" d="M288 0h9v9h-9z"/><path d="M299 0h10v10h-10z"/><path fill="#0fc627" d="M299 0h9v9h-9z"/><path d="M310 0h10v10h-10z"/><path fill="#0fc653" d="M310 0h9v9h-9z"/><path d="M321 0h10v10h-10z"/><path fill="#0ec587" d="M321 0h9v9h-9z"/><path d="M332 0h10v10h-10z"/><path fill="#0dc3c1" d="M332 0h9v9h-9z"/></g><g transform="translate(0,68)"><path d="M2 0h10v10h-10z"/><path fill="#535353" d="M2 0h9v9h-9z"/><path d="M13 0h10v10h-10z"/><path fill="#098987" d="M13 0h9v9h-9z"/><path d="M24 0h10v10h-10z"/><path fill="#098987" d="M24 0h9v9h-9z"/><path d="M35 0h10v10h-10z"/><path fill="#098987" d="M35 0h9v9h-9z"/><path d="M46 0h10v10h-10z"/><path fill="#045287" d="M46 0h9v9h-9z"/><path d="M57 0h10v10h-10z"/><path fill="#002087" d="M57 0h9v9h-9z"/><path d="M68 0h10v10h-10z"/><path fill="#000087" d="M68 0h9v9h-9z"/><path d="M79 0h10v10h-10z"/><path fill="#260087" d="M79 0h9v9h-9z"/><path d="M90 0h10v10h-10z"/><path fill="#520087" d="M90 0h9v9h-9z"/><path d="M101 0h10v10h-10z"/><path fill="#860087" d="M101 0h9v9h-9z"/><path d="M112 0h10v10h-10z"/><path fill="#860087" d="M112 0h9v9h-9z"/><path d="M123 0h10v10h-10z"/><path fill="#860087" d="M123 0h9v9h-9z"/><path d="M134 0h10v10h-10z"/><path fill="#860087" d="M134 0h9v9h-9z"/><path d="M145 0h10v10h-10z"/><path fill="#860087" d="M145 0h9v9h-9z"/><path d="M156 0h10v10h-10z"/><path fill="#860053" d="M156 0h9v9h-9z"/><path d="M167 0h10v10h-10z"/><path fill="#860027" d="M167 0h9v9h-9z"/><path d="M178 0h10v10h-10z"/><path fill="#860004" d="M178 0h9v9h-9z"/><path d="M189 0h10v10h-10z"/><path fill="#872304" d="M189 0h9v9h-9z"/><path d="M200 0h10v10h-10z"/><path fill="#875305" d="M200 0h9v9h-9z"/><path d="M211 0h10v10h-10z"/><path fill="#878a06" d="M211 0h9v9h-9z"/><path d="M222 0h10v10h-10z"/><path fill="#878a06" d="M222 0h9v9h-9z"/><path d="M233 0h10v10h-10z"/><path fill="#878a06" d="M233 0h9v9h-9z"/><path d="M244 0h10v10h-10z"/><path fill="#878a06" d="M244 0h9v9h-9z"/><path d="M255 0h10v10h-10z"/><path fill="#878a06" d="M255 0h9v9h-9z"/><path d="M266 0h10v10h-10z"/><path fill="#548a05" d="M266 0h9v9h-9z"/><path d="M277 0h10v10h-10z"/><path fill="#288b04" d="M277 0h9v9h-9z"/><path d="M288 0h10v10h-10z"/><path fill="#0a8b04" d="M288 0h9v9h-9z"/><path d="M299 0h10v10h-10z"/><path fill="#0a8b27" d="M299 0h9v9h-9z"/><path d="M310 0h10v10h-10z"/><path fill="#0a8a53" d="M310 0h9v9h-9z"/><path d="M321 0h10v10h-10z"/><path fill="#098987" d="M321 0h9v9h-9z"/><path d="M332 0h10v10h-10z"/><path fill="#098987" d="M332 0h9v9h-9z"/></g><g transform="translate(0,79)"><path d="M2 0h10v10h-10z"/><path fill="#262626" d="M2 0h9v9h-9z"/><path d="M13 0h10v10h-10z"/><path fill="#065453" d="M13 0h9v9h-9z"/><path d="M24 0h10v10h-10z"/><path fill="#065453" d="M24 0h9v9h-9z"/><path d="M35 0h10v10h-10z"/><path fill="#065453" d="M35 0h9v9h-9z"/><path d="M46 0h10v10h-10z"/><path fill="#065453" d="M46 0h9v9h-9z"/><path d="M57 0h10v10h-10z"/><path fill="#012553" d="M57 0h9v9h-9z"/><path d="M68 0h10v10h-10z"/><path fill="#000053" d="M68 0h9v9h-9z"/><path d="M79 0h10v10h-10z"/><path fill="#260053" d="M79 0h9v9h-9z"/><path d="M90 0h10v10h-10z"/><path fill="#530053" d="M90 0h9v9h-9z"/><path d="M101 0h10v10h-10z"/><path fill="#530053" d="M101 0h9v9h-9z"/><path d="M112 0h10v10h-10z"/><path fill="#530053" d="M112 0h9v9h-9z"/><path d="M123 0h10v10h-10z"/><path fill="#530053" d="M123 0h9v9h-9z"/><path d="M134 0h10v10h-10z"/><path fill="#530053" d="M134 0h9v9h-9z"/><path d="M145 0h10v10h-10z"/><path fill="#530053" d="M145 0h9v9h-9z"/><path d="M156 0h10v10h-10z"/><path fill="#530053" d="M156 0h9v9h-9z"/><path d="M167 0h10v10h-10z"/><path fill="#530026" d="M167 0h9v9h-9z"/><path d="M178 0h10v10h-10z"/><path fill="#530002" d="M178 0h9v9h-9z"/><path d="M189 0h10v10h-10z"/><path fill="#532603" d="M189 0h9v9h-9z"/><path d="M200 0h10v10h-10z"/><path fill="#535503" d="M200 0h9v9h-9z"/><path d="M211 0h10v10h-10z"/><path fill="#535503" d="M211 0h9v9h-9z"/><path d="M222 0h10v10h-10z"/><path fill="#535503" d="M222 0h9v9h-9z"/><path d="M233 0h10v10h-10z"/><path fill="#535503" d="M233 0h9v9h-9z"/><path d="M244 0h10v10h-10z"/><path fill="#535503" d="M244 0h9v9h-9z"/><path d="M255 0h10v10h-10z"/><path fill="#535503" d="M255 0h9v9h-9z"/><path d="M266 0h10v10h-10z"/><path fill="#535503" d="M266 0h9v9h-9z"/><path d="M277 0h10v10h-10z"/><path fill="#275503" d="M277 0h9v9h-9z"/><path d="M288 0h10v10h-10z"/><path fill="#065602" d="M288 0h9v9h-9z"/><path d="M299 0h10v10h-10z"/><path fill="#065526" d="M299 0h9v9h-9z"/><path d="M310 0h10v10h-10z"/><path fill="#065453" d="M310 0h9v9h-9z"/><path d="M321 0h10v10h-10z"/><path fill="#065453" d="M321 0h9v9h-9z"/><path d="M332 0h10v10h-10z"/><path fill="#065453" d="M332 0h9v9h-9z"/></g><g transform="translate(0,90)"><path d="M2 0h10v10h-10z"/><path fill="#000000" d="M2 0h9v9h-9z"/><path d="M13 0h10v10h-10z"/><path fill="#032726" d="M13 0h9v9h-9z"/><path d="M24 0h10v10h-10z"/><path fill="#032726" d="M24 0h9v9h-9z"/><path d="M35 0h10v10h-10z"/><path fill="#032726" d="M35 0h9v9h-9z"/><path d="M46 0h10v10h-10z"/><path fill="#032726" d="M46 0h9v9h-9z"/><path d="M57 0h10v10h-10z"/><path fill="#032726" d="M57 0h9v9h-9z"/><path d="M68 0h10v10h-10z"/><path fill="#000026" d="M68 0h9v9h-9z"/><path d="M79 0h10v10h-10z"/><path fill="#260026" d="M79 0h9v9h-9z"/><path d="M90 0h10v10h-10z"/><path fill="#260026" d="M90 0h9v9h-9z"/><path d="M101 0h10v10h-10z"/><path fill="#260026" d="M101 0h9v9h-9z"/><path d="M112 0h10v10h-10z"/><path fill="#260026" d="M112 0h9v9h-9z"/><path d="M123 0h10v10h-10z"/><path fill="#260026" d="M123 0h9v9h-9z"/><path d="M134 0h10v10h-10z"/><path fill="#260026" d="M134 0h9v9h-9z"/><path d="M145 0h10v10h-10z"/><path fill="#260026" d="M145 0h9v9h-9z"/><path d="M156 0h10v10h-10z"/><path fill="#260026" d="M156 0h9v9h-9z"/><path d="M167 0h10v10h-10z"/><path fill="#260026" d="M167 0h9v9h-9z"/><path d="M178 0h10v10h-10z"/><path fill="#260001" d="M178 0h9v9h-9z"/><path d="M189 0h10v10h-10z"/><path fill="#262702" d="M189 0h9v9h-9z"/><path d="M200 0h10v10h-10z"/><path fill="#262702" d="M200 0h9v9h-9z"/><path d="M211 0h10v10h-10z"/><path fill="#262702" d="M211 0h9v9h-9z"/><path d="M222 0h10v10h-10z"/><path fill="#262702" d="M222 0h9v9h-9z"/><path d="M233 0h10v10h-10z"/><path fill="#262702" d="M233 0h9v9h-9z"/><path d="M244 0h10v10h-10z"/><path fill="#262702" d="M244 0h9v9h-9z"/><path d="M255 0h10v10h-10z"/><path fill="#262702" d="M255 0h9v9h-9z"/><path d="M266 0h10v10h-10z"/><path fill="#262702" d="M266 0h9v9h-9z"/><path d="M277 0h10v10h-10z"/><path fill="#032801" d="M277 0h9v9h-9z"/><path d="M288 0h10v10h-10z"/><path fill="#032726" d="M288 0h9v9h-9z"/><path d="M299 0h10v10h-10z"/><path fill="#032726" d="M299 0h9v9h-9z"/><path d="M310 0h10v10h-10z"/><path fill="#032726" d="M310 0h9v9h-9z"/><path d="M321 0h10v10h-10z"/><path fill="#032726" d="M321 0h9v9h-9z"/><path d="M332 0h10v10h-10z"/><path fill="#262626" d="M332 0h9v9h-9z"/></g></svg>
<div class="t b" style="left:948px;top:132px">Recent:</div><svg class="abs" style="left:948px;top:149px" width="58" height="80" viewBox="0 0 58 80" shape-rendering="crispEdges"><rect width="58" height="80" fill="#000"/><rect x="1" y="1" width="56" height="78" fill="#fff"/><path d="M2 2h10v10h-10z"/><path fill="#fff" d="M2 2h9v9h-9z"/><path d="M13 2h10v10h-10z"/><path fill="#fff" d="M13 2h9v9h-9z"/><path d="M24 2h10v10h-10z"/><path fill="#fff" d="M24 2h9v9h-9z"/><path d="M35 2h10v10h-10z"/><path fill="#fff" d="M35 2h9v9h-9z"/><path d="M46 2h10v10h-10z"/><path fill="#fff" d="M46 2h9v9h-9z"/><path d="M2 13h10v10h-10z"/><path fill="#fff" d="M2 13h9v9h-9z"/><path d="M13 13h10v10h-10z"/><path fill="#fff" d="M13 13h9v9h-9z"/><path d="M24 13h10v10h-10z"/><path fill="#fff" d="M24 13h9v9h-9z"/><path d="M35 13h10v10h-10z"/><path fill="#fff" d="M35 13h9v9h-9z"/><path d="M46 13h10v10h-10z"/><path fill="#fff" d="M46 13h9v9h-9z"/><path d="M2 24h10v10h-10z"/><path fill="#fff" d="M2 24h9v9h-9z"/><path d="M13 24h10v10h-10z"/><path fill="#fff" d="M13 24h9v9h-9z"/><path d="M24 24h10v10h-10z"/><path fill="#fff" d="M24 24h9v9h-9z"/><path d="M35 24h10v10h-10z"/><path fill="#fff" d="M35 24h9v9h-9z"/><path d="M46 24h10v10h-10z"/><path fill="#fff" d="M46 24h9v9h-9z"/><path d="M2 35h10v10h-10z"/><path fill="#fff" d="M2 35h9v9h-9z"/><path d="M13 35h10v10h-10z"/><path fill="#fff" d="M13 35h9v9h-9z"/><path d="M24 35h10v10h-10z"/><path fill="#fff" d="M24 35h9v9h-9z"/><path d="M35 35h10v10h-10z"/><path fill="#fff" d="M35 35h9v9h-9z"/><path d="M46 35h10v10h-10z"/><path fill="#fff" d="M46 35h9v9h-9z"/><path d="M2 46h10v10h-10z"/><path fill="#fff" d="M2 46h9v9h-9z"/><path d="M13 46h10v10h-10z"/><path fill="#fff" d="M13 46h9v9h-9z"/><path d="M24 46h10v10h-10z"/><path fill="#fff" d="M24 46h9v9h-9z"/><path d="M35 46h10v10h-10z"/><path fill="#fff" d="M35 46h9v9h-9z"/><path d="M46 46h10v10h-10z"/><path fill="#fff" d="M46 46h9v9h-9z"/><path d="M2 57h10v10h-10z"/><path fill="#fff" d="M2 57h9v9h-9z"/><path d="M13 57h10v10h-10z"/><path fill="#fff" d="M13 57h9v9h-9z"/><path d="M24 57h10v10h-10z"/><path fill="#fff" d="M24 57h9v9h-9z"/><path d="M35 57h10v10h-10z"/><path fill="#fff" d="M35 57h9v9h-9z"/><path d="M46 57h10v10h-10z"/><path fill="#fff" d="M46 57h9v9h-9z"/><path d="M2 68h10v10h-10z"/><path fill="#fff" d="M2 68h9v9h-9z"/><path d="M13 68h10v10h-10z"/><path fill="#fff" d="M13 68h9v9h-9z"/><path d="M24 68h10v10h-10z"/><path fill="#fff" d="M24 68h9v9h-9z"/><path d="M35 68h10v10h-10z"/><path fill="#fff" d="M35 68h9v9h-9z"/><path d="M46 68h10v10h-10z"/><path fill="#fff" d="M46 68h9v9h-9z"/></svg>
<div class="abs" style="left:582px;top:312px;width:436px;height:244px;background:#fff;border:1px solid #8c8c8c;border-top-color:#5f5f5f;border-left-color:#5f5f5f"></div>
<div id="listing" class="abs" style="left:583px;top:313px;width:418px;height:227px;overflow:hidden"><div class="abs" style="left:1px;top:1px;width:2px;height:16px;background:#ff0000"></div><div class="m" style="left:64px;top:1px;color:#6d6d6d">/<span class="st">***********************************</span>/</div>
<div class="m" style="left:64px;top:17px;color:#6d6d6d">/<span class="st">*</span>             PLATE               <span class="st">*</span>/</div>
<div class="m" style="left:64px;top:33px;color:#6d6d6d">/<span class="st">***********************************</span>/</div>
<div class="m" style="left:64px;top:49px;color:#6e0040">Tags: tag1, tag2</div>
<div class="m" style="left:106px;top:65px;color:#fe00ff">entry</div>
<div class="m" style="left:29px;top:81px;color:#000">1000</div><div class="m" style="left:120px;top:81px;color:#0000ff">c2 17 3d</div><div class="m" style="left:225px;top:81px;color:#00006d">call</div><div class="m" style="left:274px;top:81px;color:#8a8a0a">printf</div><div class="m" style="left:379px;top:81px;color:#0000ff">; End of</div>
<div class="m" style="left:29px;top:97px;color:#000">1003</div><div class="m" style="left:120px;top:97px;color:#0000ff">23 15 3d</div><div class="m" style="left:225px;top:97px;color:#ff00b4">call</div><div class="m" style="left:274px;top:97px;color:#fe0007">0x10000</div><div class="m" style="left:379px;top:97px;color:#0000ff">; 0x1000</div>
<div class="m" style="left:29px;top:113px;color:#000">1006</div><div class="m" style="left:120px;top:113px;color:#0000ff">b2 3f 2d</div><div class="m" style="left:225px;top:113px;color:#00006d">mov</div><div class="m" style="left:274px;top:113px"><span style="color:#8a8a0a">ax</span><span style="color:#00006d">,[LAB2000]</span></div><div class="abs" style="left:274px;top:127px;width:84px;height:1px;background:#4a4aff"></div>
<div class="m" style="left:106px;top:129px;color:#00006d">LAB1009</div><div class="m" style="left:400px;top:129px;color:#087003">XREF[1]:</div>
<div class="m" style="left:29px;top:145px;color:#000">1009</div><div class="m" style="left:120px;top:145px;color:#0000ff">c5 b2 32</div><div class="m" style="left:225px;top:145px;color:#00006d">call</div><div class="m" style="left:274px;top:145px;color:#8a8a0a">sprintf</div><div class="m" style="left:379px;top:145px;color:#0000ff">; alias</div>
<div class="m" style="left:29px;top:161px;color:#000">100c</div><div class="m" style="left:120px;top:161px;color:#0000ff">24 4e ff</div><div class="m" style="left:225px;top:161px;color:#00006d">jnz</div><div class="m" style="left:274px;top:161px;color:#00006d">LAB1009</div>
<div class="m" style="left:29px;top:177px;color:#000">100f</div><div class="m" style="left:120px;top:177px;color:#0000ff">23 35 d2</div><div class="m" style="left:225px;top:177px;color:#00006d">mov</div><div class="abs" style="left:225px;top:191px;width:21px;height:1px;background:#4a4aff"></div><div class="m" style="left:274px;top:177px"><span style="color:#8a8a0a">ax</span><span style="color:#202020">,[</span><span style="color:#8a8a0a">dataAlias</span><span style="color:#202020">]</span></div>
<div class="m" style="left:29px;top:193px;color:#000">1012</div><div class="m" style="left:120px;top:193px;color:#0000ff">22 f3 b2</div><div class="m" style="left:225px;top:193px;color:#00006d">jnz</div><div class="m" style="left:274px;top:193px;color:#8a8a0a">LAB1009+1</div><div class="abs" style="left:274px;top:207px;width:63px;height:1px;background:#4a4aff"></div>
<div class="m" style="left:29px;top:209px;color:#000">1016</div><div class="m" style="left:120px;top:209px;color:#0000ff">c5 48 9d</div><div class="m" style="left:225px;top:209px;color:#00006d">call</div><div class="m" style="left:274px;top:209px;color:#0000ff">MyFunc</div>
</div>
<div class="abs" style="left:1001px;top:313px;width:15px;height:227px;background:#fafafa;border-left:1px solid #e9e9e9"></div><div class="abs" style="left:1005px;top:315px;width:8px;height:82px;border-radius:4px;background:#b4b4b4"></div><div class="abs" style="left:583px;top:540px;width:418px;height:15px;background:#fafafa;border-top:1px solid #e9e9e9"></div><div class="abs" style="left:585px;top:544px;width:305px;height:8px;border-radius:4px;background:#b4b4b4"></div>
<div class="abs" style="left:1018px;top:23px;width:1px;height:564px;background:#8a8a8a"></div><div class="abs" style="left:0;top:586px;width:1019px;height:1px;background:#9a9a9a"></div>
<div class="abs btn" style="left:877px;top:560px;width:135px;height:21px;line-height:19px;font-size:13.5px;word-spacing:0">Restore Defaults</div>
<div class="abs btn" style="left:381px;top:599px;width:74px;height:21px;line-height:19px;font-size:13.5px;word-spacing:0;background:linear-gradient(#5da5fb,#0c65f6);border-color:#3f8cf6;border-bottom-color:#0953dc;color:#000">OK</div><div class="abs btn" style="left:473px;top:599px;width:74px;height:21px;line-height:19px;font-size:13.5px;word-spacing:0">Cancel</div><div class="abs btn" style="left:565px;top:599px;width:74px;height:21px;line-height:19px;font-size:13.5px;word-spacing:0;color:#8c8c8c;background:#f5f5f5;border-color:#d2d2d2">Apply</div>
</body></html>
